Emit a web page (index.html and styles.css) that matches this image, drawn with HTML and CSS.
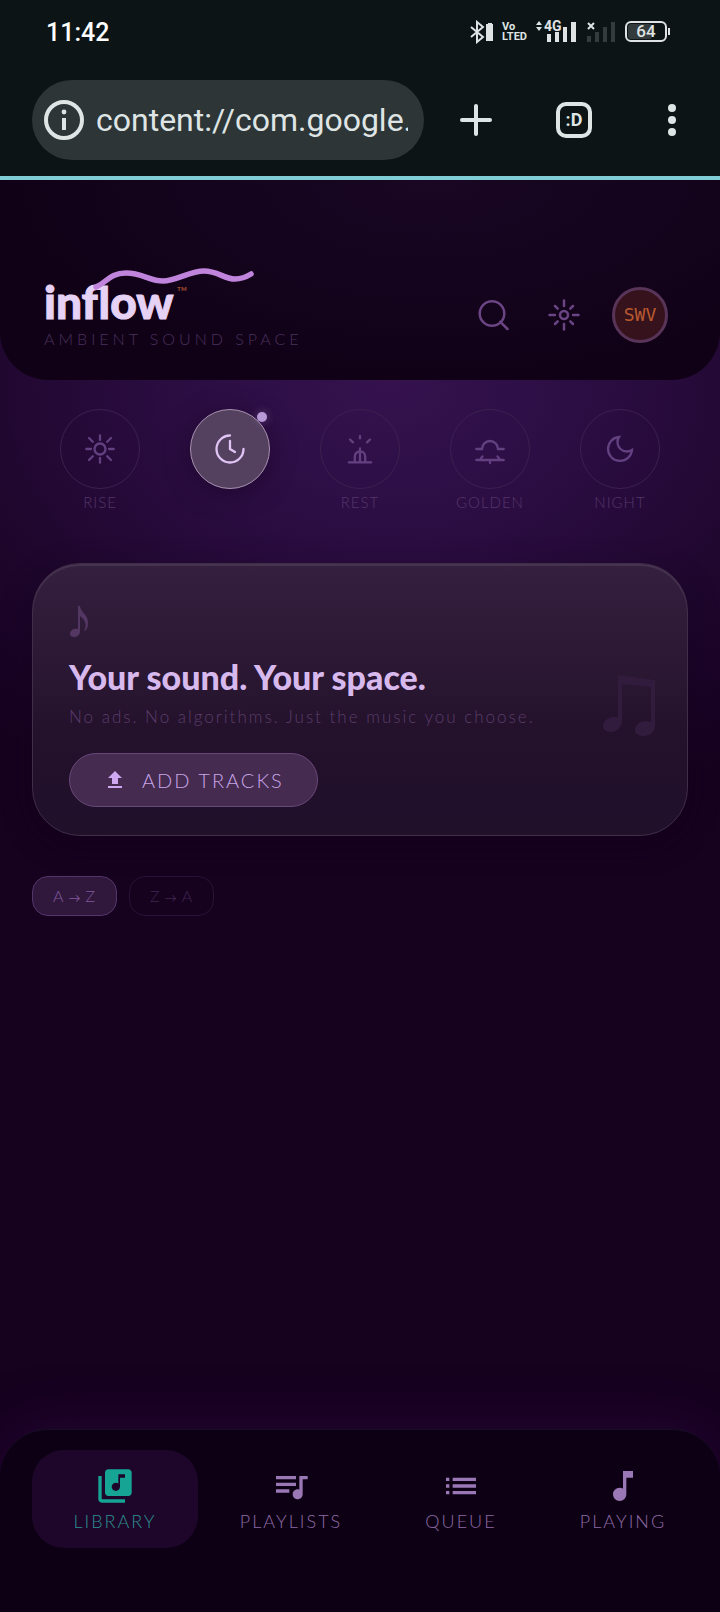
FILE: index.html
```html
<!DOCTYPE html>
<html lang="en">
<head>
    <meta charset="UTF-8">
    <meta name="viewport" content="width=device-width, initial-scale=1.0">
    <title>inflow</title>
    <link rel="stylesheet" href="styles.css">
</head>
<body>

<!-- Phone status bar and browser toolbar -->
<div class="browser">
    <div class="status-bar">
        <span class="clock">11:42</span>
        <div class="status-icons">
            <svg width="24" height="24" viewBox="0 0 24 24">
                <path d="M2 7l12 10-6 5V2l6 5L2 17" fill="none" stroke="#dfe3e3" stroke-width="2"/>
                <path d="M18 4h1V3h4v1h1v17h-7V4z" fill="#dfe3e3"/>
            </svg>
            <span class="volte"><span>Vo</span><span>LTED</span></span>
            <svg width="42" height="32" viewBox="0 -4 42 32">
                <path d="M0 5l3-4 3 4zM0 7l3 4 3-4z" fill="#dfe3e3"/>
                <text class="net" x="8" y="11">4G</text>
                <path d="M11 14h4v8h-4zM19 12h4v10h-4zM27 7h4v15h-4zM35 2h5v20h-5z" fill="#dfe3e3"/>
            </svg>
            <svg width="29" height="24" viewBox="0 0 29 24">
                <path d="M1 3l6 6M7 3L1 9" stroke="#dfe3e3" stroke-width="2"/>
                <path d="M0 16h4v6H0zM8 12h4v10H8zM16 7h4v15h-4zM24 2h4v20h-4z" fill="#333b3c"/>
            </svg>
            <svg width="46" height="24" viewBox="0 0 46 24">
                <rect x="3" y="4" width="24" height="15" rx="3" fill="#333b3c"/>
                <rect x="1" y="2" width="40" height="19" rx="5" fill="none" stroke="#dfe3e3" stroke-width="2"/>
                <path d="M44 8v7" stroke="#dfe3e3" stroke-width="2"/>
                <text class="level" x="21" y="17" text-anchor="middle">64</text>
            </svg>
        </div>
    </div>
    <div class="toolbar">
        <div class="url-bar">
            <svg width="40" height="40" viewBox="0 0 40 40">
                <circle cx="20" cy="20" r="18" fill="none" stroke="#dfe5e5" stroke-width="4"/>
                <circle cx="20" cy="12" r="2.4" fill="#dfe5e5"/>
                <path d="M18 18h4v12h-4z" fill="#dfe5e5"/>
            </svg>
            <input type="text" class="url" aria-label="Address" value="content://com.google.">
        </div>
        <div class="toolbar-actions">
            <button class="tool-btn" aria-label="New tab">
                <svg width="32" height="32" viewBox="0 0 32 32"><path d="M16 2v28M2 16h28" stroke="#dfe5e5" stroke-width="4" stroke-linecap="round"/></svg>
            </button>
            <button class="tool-btn"><span class="tab-count">:D</span></button>
            <button class="tool-btn" aria-label="Menu">
                <svg width="8" height="32" viewBox="0 0 8 32" fill="#dfe5e5"><circle cx="4" cy="4" r="4"/><circle cx="4" cy="16" r="4"/><circle cx="4" cy="28" r="4"/></svg>
            </button>
        </div>
    </div>
</div>

<div class="app">

    <header class="header">
        <div class="brand">
            <svg class="wave" width="164" height="24" viewBox="0 0 164 24">
                <path d="M4 19C14 15 18 5 34 5S58 13 71 13 98 3 112 3 132 11 143 11Q151 11 159 6" fill="none" stroke="#c084dc" stroke-width="5.5" stroke-linecap="round"/>
            </svg>
            <h1 class="logo">inflow<span class="tm">™</span></h1>
            <p class="tagline">AMBIENT SOUND SPACE</p>
        </div>
        <div class="header-actions">
            <button class="icon-btn" aria-label="Search">
                <svg class="stroke" width="32" height="32" viewBox="0 0 32 32"><circle cx="15" cy="14.5" r="12.3"/><path d="M23.3 22.8l7.2 7.2"/></svg>
            </button>
            <button class="icon-btn" aria-label="Theme">
                <svg class="stroke" width="32" height="32" viewBox="0 0 32 32"><circle cx="16" cy="16" r="4"/><path d="M16 1.5v5.5M16 25v5.5M1.5 16H7M25 16h5.5M7 7l2.7 2.7M22.3 22.3L25 25M25 7l-2.7 2.7M9.7 22.3L7 25"/></svg>
            </button>
            <button class="avatar">SWV</button>
        </div>
    </header>

    <main class="main">

        <div class="moods">
            <button class="mood">
                <span class="mood-circle">
                    <svg width="32" height="32" viewBox="0 0 32 32"><circle cx="16" cy="16" r="5.5"/><path d="M16 2.3V7M16 25v4.7M2.3 16H7M25 16h4.7M5 5l3.8 3.8M23.2 23.2L27 27M27 5l-3.8 3.8M8.8 23.2L5 27"/></svg>
                </span>
                <span class="mood-label">RISE</span>
            </button>
            <button class="mood active" aria-label="Now">
                <span class="mood-circle">
                    <svg width="32" height="32" viewBox="0 0 32 32"><path d="M16 2.5A13.5 13.5 0 1 0 29.5 16M16 8v8l5 3"/></svg>
                    <span class="mood-dot"></span>
                </span>
                <span class="mood-label"></span>
            </button>
            <button class="mood">
                <span class="mood-circle">
                    <svg width="32" height="32" viewBox="0 0 32 32"><path d="M16 2.8v2.6M6 6.5L9 9.3M26 6.5l-3 2.8M4.8 29.3h22.4M10.8 29v-5.5a5.2 5.2 0 0 1 10.4 0V29M16 15.5V29"/></svg>
                </span>
                <span class="mood-label">REST</span>
            </button>
            <button class="mood">
                <span class="mood-circle">
                    <svg width="32" height="32" viewBox="0 0 32 32"><path d="M2.3 16H8a8 8 0 0 1 16 0h5.7M2.3 27h27.4M6.5 26l2-2.6M25.5 26l-2-2.6M16 27v3"/></svg>
                </span>
                <span class="mood-label">GOLDEN</span>
            </button>
            <button class="mood">
                <span class="mood-circle">
                    <svg width="32" height="32" viewBox="0 0 32 32"><path d="M28 17A12 12 0 1 1 15 4 9.4 9.4 0 0 0 28 17z"/></svg>
                </span>
                <span class="mood-label">NIGHT</span>
            </button>
        </div>

        <section class="hero">
            <svg class="note" width="20" height="34" viewBox="0 0 20 34">
                <path d="M9 1h2c0 6 8 8 8 17 0 4-1 6-3 8-1 0-1-1 0-2 2-6-1-10-5-13v15c0 4-3 6-6 6-2 0-4-1-4-3 0-4 4-6 8-5z"/>
            </svg>
            <h2 class="hero-title">Your sound. Your space.</h2>
            <p class="hero-text">No ads. No algorithms. Just the music you choose.</p>
            <button class="add-btn">
                <svg width="24" height="24" viewBox="0 0 24 24"><path d="M9 16h6v-6h4l-7-7-7 7h4zm-4 2h14v2H5z"/></svg>
                ADD TRACKS
            </button>
            <svg class="big-note" width="52" height="62" viewBox="0 0 52 62">
                <path d="M15 0l37 5v46c0 6-5 10-11 10-5 0-9-2-9-6 0-6 8-11 16-8V12L19 9v37c0 6-5 11-11 11-5 0-8-3-8-6 0-6 8-11 15-8z"/>
            </svg>
        </section>

        <div class="sort">
            <button class="sort-btn active">A<span class="arrow">→</span>Z</button>
            <button class="sort-btn">Z<span class="arrow">→</span>A</button>
        </div>

    </main>

    <nav class="nav">
        <a href="#library" class="nav-item active">
            <svg width="40" height="40" viewBox="0 0 24 24"><path d="M20 2H8c-1.1 0-2 .9-2 2v12c0 1.1.9 2 2 2h12c1.1 0 2-.9 2-2V4c0-1.1-.9-2-2-2zm-2 5h-3v5.5c0 1.38-1.12 2.5-2.5 2.5S10 13.88 10 12.5s1.12-2.5 2.5-2.5c.57 0 1.08.19 1.5.51V5h4v2zM4 6H2v14c0 1.1.9 2 2 2h14v-2H4V6z"/></svg>
            LIBRARY
        </a>
        <a href="#playlists" class="nav-item">
            <svg width="40" height="40" viewBox="0 0 24 24"><path d="M15 6H3v2h12V6zm0 4H3v2h12v-2zM3 16h8v-2H3v2zM17 6v8.18c-.31-.11-.65-.18-1-.18-1.66 0-3 1.34-3 3s1.34 3 3 3 3-1.34 3-3V8h3V6h-5z"/></svg>
            PLAYLISTS
        </a>
        <a href="#queue" class="nav-item">
            <svg width="40" height="40" viewBox="0 0 24 24"><path d="M3 13h2v-2H3v2zm0 4h2v-2H3v2zm0-8h2V7H3v2zm4 4h14v-2H7v2zm0 4h14v-2H7v2zM7 7v2h14V7H7z"/></svg>
            QUEUE
        </a>
        <a href="#playing" class="nav-item">
            <svg width="40" height="40" viewBox="0 0 24 24"><path d="M12 3v10.55c-.59-.34-1.27-.55-2-.55-2.21 0-4 1.79-4 4s1.79 4 4 4 4-1.79 4-4V7h4V3h-6z"/></svg>
            PLAYING
        </a>
    </nav>

</div>

</body>
</html>
```

FILE: styles.css
```css
* {
    margin: 0;
    padding: 0;
    box-sizing: border-box;
}
body {
    display: flex;
    flex-direction: column;
    min-height: 100vh;
    background: #16011f;
    font-family: Lato, "Liberation Sans", sans-serif;
    font-weight: 300;
}
button {
    background: none;
    border: none;
    font: inherit;
    color: inherit;
    cursor: pointer;
}
svg {
    display: block;
    flex-shrink: 0;
}

/* Browser */
.browser {
    background: #0c1416;
    border-bottom: 4px solid #80cdd6;
    font-family: Roboto, sans-serif;
    color: #dfe5e5;
}
.status-bar {
    display: flex;
    justify-content: space-between;
    align-items: center;
    height: 64px;
    padding: 0 49px 0 46px;
}
.clock {
    font-size: 25px;
    font-weight: 500;
    color: #fff;
}
.status-icons {
    display: flex;
    align-items: center;
    gap: 9px;
}
.volte {
    display: flex;
    flex-direction: column;
    font-size: 11px;
    line-height: 10px;
    font-weight: 700;
}
.net {
    font-size: 14px;
    font-weight: 700;
    fill: #dfe3e3;
}
.level {
    font-size: 17px;
    font-weight: 500;
    fill: #dfe3e3;
}
.toolbar {
    display: flex;
    align-items: center;
    gap: 28px;
    padding: 16px 24px 16px 32px;
}
.url-bar {
    flex: 1;
    min-width: 0;
    display: flex;
    align-items: center;
    gap: 12px;
    height: 80px;
    padding: 0 16px 0 12px;
    border-radius: 40px;
    background: #2d3537;
}
.url {
    flex: 1;
    min-width: 0;
    background: none;
    border: none;
    outline: none;
    font-family: Roboto, sans-serif;
    font-size: 32px;
    color: #dfe5e5;
}
.toolbar-actions {
    display: flex;
    gap: 50px;
}
.tool-btn {
    display: flex;
    justify-content: center;
    align-items: center;
    width: 48px;
    height: 48px;
}
.tab-count {
    width: 36px;
    height: 36px;
    border: 4px solid #dfe5e5;
    border-radius: 10px;
    font-size: 18px;
    line-height: 27px;
    font-weight: 700;
    text-align: center;
}

/* App */
.app {
    flex: 1;
    display: flex;
    flex-direction: column;
    background: radial-gradient(ellipse 85% 32% at 54% 14%, #35124e 0%, #2b0d42 35%, #1e062c 70%, #16011f 100%);
}
.header {
    display: flex;
    justify-content: space-between;
    align-items: center;
    padding: 100px 52px 31px 44px;
    border-radius: 0 0 48px 48px;
    background: radial-gradient(ellipse 60% 100% at 60% 0%, #190723, #100117);
}
.brand {
    position: relative;
}
.wave {
    position: absolute;
    left: 48px;
    top: -12px;
}
.logo {
    display: flex;
    margin-bottom: 5px;
    font-size: 46px;
    line-height: 44px;
    font-weight: 900;
    color: #e6d2f5;
    -webkit-text-stroke: 1px #e6d2f5;
}
.tm {
    margin-left: 3px;
    font-size: 14px;
    line-height: 24px;
    font-weight: 400;
    color: #a04c2c;
    -webkit-text-stroke: 0;
}
.tagline {
    font-size: 16px;
    line-height: 20px;
    letter-spacing: 4px;
    color: #4a305c;
}
.header-actions {
    display: flex;
    align-items: center;
    gap: 25px;
}
.icon-btn {
    display: flex;
    justify-content: center;
    align-items: center;
    width: 46px;
    height: 46px;
}
.stroke {
    fill: none;
    stroke: #6b4484;
    stroke-width: 2.5;
    stroke-linecap: round;
}
.avatar {
    width: 56px;
    height: 56px;
    border: 3px solid #593459;
    border-radius: 50%;
    background: #35121c;
    color: #b9592f;
    font-family: "DejaVu Sans Mono", monospace;
    font-size: 18px;
}

.main {
    flex: 1;
    padding-bottom: 32px;
}
.moods {
    display: grid;
    grid-template-columns: repeat(5, 1fr);
    padding: 29px 35px 0;
}
.mood {
    display: flex;
    flex-direction: column;
    align-items: center;
    gap: 3px;
    color: #634080;
}
.mood-circle {
    position: relative;
    display: flex;
    justify-content: center;
    align-items: center;
    width: 80px;
    height: 80px;
    border: 1px solid #3c2050;
    border-radius: 50%;
}
.mood-circle svg {
    fill: none;
    stroke: currentColor;
    stroke-width: 2.3;
    stroke-linecap: round;
}
.mood.active {
    color: #dfc4f4;
}
.mood.active .mood-circle {
    background: #54405f;
    border-color: #a893b0;
    box-shadow: 0 4px 24px rgba(20, 2, 30, 0.5);
}
.mood-dot {
    position: absolute;
    top: 2px;
    right: 2px;
    width: 10px;
    height: 10px;
    border-radius: 50%;
    background: #b899d8;
    box-shadow: 0 0 8px rgba(184, 153, 216, 0.4);
}
.mood-label {
    min-height: 20px;
    font-size: 15px;
    line-height: 20px;
    letter-spacing: 1px;
    color: #543569;
}

.hero {
    position: relative;
    margin: 51px 32px 0;
    padding: 41px 36px 28px;
    border: 1px solid #402d48;
    border-radius: 48px;
    background: linear-gradient(#34203f, #291631 45%, #24112c 60%, #20102a);
    box-shadow: inset 0 2px 0 #46334f, 0 8px 32px rgba(16, 0, 24, 0.3);
}
.note {
    fill: #543662;
    margin-bottom: 18px;
}
.hero-title {
    font-size: 34px;
    line-height: 40px;
    font-weight: 900;
    color: #d7b9ee;
}
.hero-text {
    margin: 8px 0 24px;
    font-size: 17px;
    line-height: 24px;
    letter-spacing: 2px;
    color: #5a3d6b;
}
.add-btn {
    display: flex;
    align-items: center;
    gap: 15px;
    padding: 0 33px;
    border: 1px solid #68487a;
    border-radius: 27px;
    background: #442b4f;
    font-size: 20px;
    line-height: 52px;
    letter-spacing: 2px;
    color: #c9a5e8;
}
.add-btn svg {
    fill: #cfa8f2;
}
.big-note {
    position: absolute;
    right: 32px;
    top: 111px;
    fill: #321c3e;
}

.sort {
    display: flex;
    gap: 12px;
    padding: 40px 32px 0;
}
.sort-btn {
    padding: 0 20px;
    border: 1px solid #2b1238;
    border-radius: 16px;
    font-size: 16px;
    line-height: 38px;
    letter-spacing: 1px;
    color: #3f2650;
}
.sort-btn.active {
    background: #2f183c;
    border-color: #54356a;
    color: #81589c;
}
.arrow {
    margin: 0 4px;
    font-size: 12px;
    line-height: 16px;
    font-weight: 400;
}

/* Bottom navigation */
.nav {
    display: grid;
    grid-template-columns: 166fr 186fr 154fr 170fr;
    padding: 20px 12px 64px 32px;
    border-top: 1px solid #160f25;
    border-radius: 48px 48px 0 0;
    background: #0d0014;
    box-shadow: 0 -8px 48px rgba(40, 6, 56, 0.6);
}
.nav-item {
    display: flex;
    flex-direction: column;
    align-items: center;
    gap: 5px;
    padding: 16px 0 17px;
    border-radius: 32px;
    font-size: 18px;
    line-height: 20px;
    letter-spacing: 2px;
    text-decoration: none;
    color: #8d6ba6;
}
.nav-item svg {
    fill: #9a78b6;
}
.nav-item.active {
    background: #1e062a;
    color: #2b9090;
}
.nav-item.active svg {
    fill: #16a595;
}
```
